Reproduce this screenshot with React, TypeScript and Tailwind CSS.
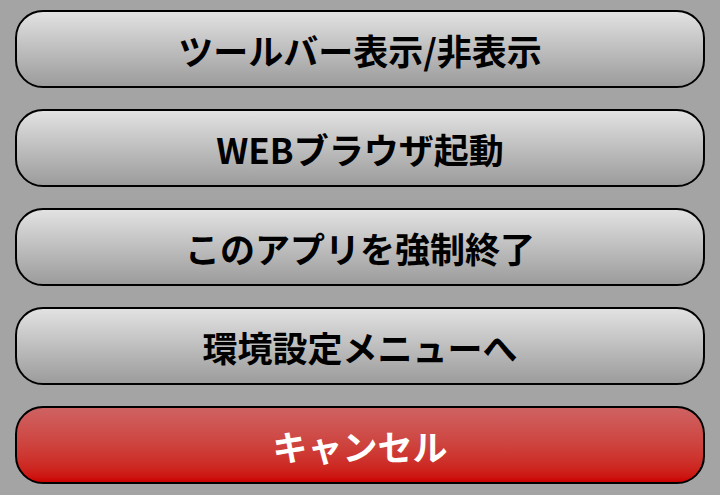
import React from "react";

const items = [
  "ツールバー表示/非表示",
  "WEBブラウザ起動",
  "このアプリを強制終了",
  "環境設定メニューへ",
];

export default function App() {
  return (
    <div
      className="w-[720px] h-[495px] bg-[#a4a4a4] flex flex-col gap-[21px] px-[15px] pt-[10px]"
      style={{ fontFamily: '"Noto Sans CJK JP", "Noto Sans", sans-serif' }}
    >
      {items.map((t) => (
        <div
          key={t}
          className="h-[78px] rounded-[28px] border-2 border-black bg-gradient-to-b from-[#e2e2e2] to-[#9c9c9c] flex items-center justify-center text-black text-[35px] leading-none font-bold"
        >
          {t}
        </div>
      ))}
      <div className="h-[78px] rounded-[28px] border-2 border-black bg-gradient-to-b from-[#ce6262] to-[#cc0000] flex items-center justify-center text-white text-[35px] leading-none font-bold">
        キャンセル
      </div>
    </div>
  );
}
